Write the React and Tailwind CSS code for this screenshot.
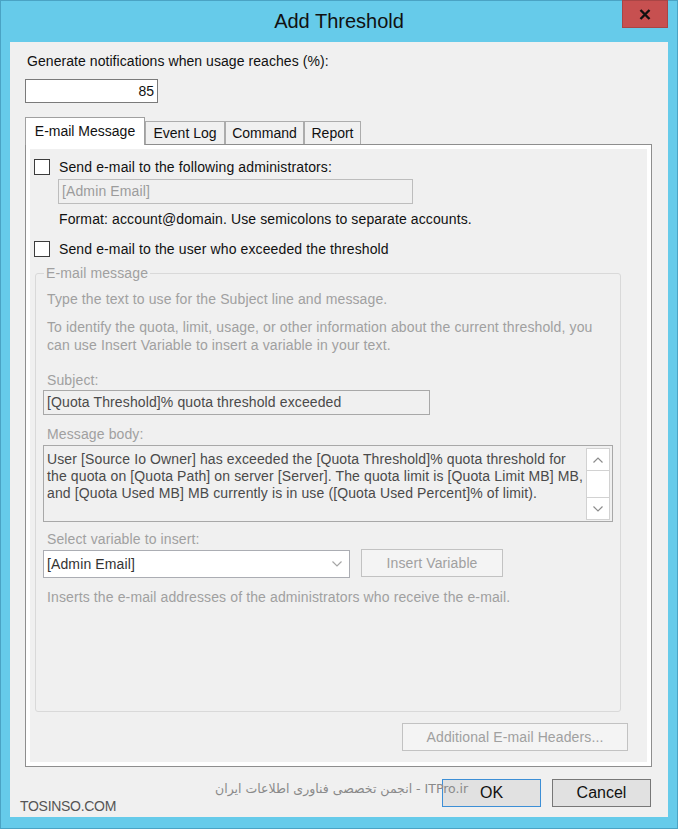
import React from 'react';

const Checkbox = () => (
  <div className="w-[16px] h-[16px] border border-[#3c3c3c] bg-white shrink-0" />
);

const Chevron = ({ up, color = '#8c8c8c' }) => (
  <svg width="12" height="8" viewBox="0 0 12 8">
    <path d={up ? 'M1.5 6.5 L6 2 L10.5 6.5' : 'M1.5 1.5 L6 6 L10.5 1.5'} fill="none" stroke={color} strokeWidth="1.2" />
  </svg>
);

const App = () => {
  return (
    <div className="w-[678px] h-[829px] bg-[#66cbea] border border-[#4aa3c4] font-['Liberation_Sans',Arial,sans-serif] text-[14px] text-[#111]">
      {/* title bar */}
      <div className="h-[41px] flex">
        <div className="w-[55px]" />
        <div className="flex-1 text-center text-[20px] leading-[41px] text-[#111]">Add Threshold</div>
        <div className="w-[46px] h-[28px] mr-[9px] -mt-px bg-[#c75050] border border-[#a94545] flex items-center justify-center">
          <svg width="12" height="11" viewBox="0 0 12 11">
            <path d="M1.5 1 L10.5 10 M10.5 1 L1.5 10" stroke="#111" strokeWidth="2.4" />
          </svg>
        </div>
      </div>

      {/* client area */}
      <div className="relative mx-[9px] h-[775px] bg-[#f0f0f0] pl-[15px] pr-[16px] pt-[11px]">
        <div className="ml-[2px] h-[16px] leading-[16px] tracking-[0.06px]">Generate notifications when usage reaches (%):</div>
        <div className="mt-[10px] w-[133px] h-[24px] border border-[#7a7a7a] bg-white text-right pr-[3px] leading-[22px]">85</div>

        {/* tabs */}
        <div className="mt-[14px] h-[27px] flex items-end">
          <div className="relative z-10 -mb-px w-[120px] h-[28px] border border-b-0 border-[#a0a0a0] bg-white text-center pt-[5px] leading-[16px]">E-mail Message</div>
          <div className="w-[80px] h-[23px] border border-b-0 border-[#acacac] bg-[#f0f0f0] text-center pt-[3px] leading-[16px]">Event Log</div>
          <div className="w-[79px] h-[23px] border border-b-0 border-[#acacac] bg-[#f0f0f0] text-center pt-[3px] leading-[16px]">Command</div>
          <div className="w-[57px] h-[23px] border border-b-0 border-[#acacac] bg-[#f0f0f0] text-center pt-[3px] leading-[16px]">Report</div>
        </div>

        {/* tab panel */}
        <div className="w-[627px] h-[623px] border border-[#8e8e8e] bg-white p-[4px]">
          <div className="h-full bg-[#f0f0f0] flex flex-col tracking-[0.12px]">
            <div className="mt-[10px] ml-[4px] flex items-center gap-[9px] leading-[16px]">
              <Checkbox />
              <span>Send e-mail to the following administrators:</span>
            </div>
            <div className="ml-[28px] mt-[4px] w-[355px] h-[25px] border border-[#bdbdbd] bg-[#f0f0f0] text-[#9c9c9c] pl-[3px] leading-[23px]">[Admin Email]</div>
            <div className="ml-[29px] mt-[7px] leading-[16px]">Format: account@domain. Use semicolons to separate accounts.</div>
            <div className="mt-[14px] ml-[4px] flex items-center gap-[9px] leading-[16px]">
              <Checkbox />
              <span>Send e-mail to the user who exceeded the threshold</span>
            </div>

            <fieldset className="ml-[5px] mt-[8px] w-[586px] h-[447px] border border-[#d9d9d9] rounded-[3px] p-0 m-0 text-[#a0a0a0]">
              <legend className="ml-[8px] px-[2px] leading-[16px]">E-mail message</legend>
              <div className="ml-[11px] mt-[10px] leading-[16px]">Type the text to use for the Subject line and message.</div>
              <div className="ml-[11px] mt-[11px] leading-[18px] whitespace-nowrap">
                To identify the quota, limit, usage, or other information about the current threshold, you
                <br />
                can use Insert Variable to insert a variable in your text.
              </div>
              <div className="ml-[11px] mt-[18px] leading-[16px]">Subject:</div>
              <div className="ml-[7px] mt-[2px] w-[387px] h-[25px] border border-[#a8a8a8] bg-[#f0f0f0] text-[#4a4a4a] pl-[3px] leading-[23px]">[Quota Threshold]% quota threshold exceeded</div>
              <div className="ml-[11px] mt-[11px] leading-[16px]">Message body:</div>
              <div className="ml-[7px] mt-[3px] w-[570px] h-[77px] border border-[#a8a8a8] bg-[#f0f0f0] flex">
                <div className="flex-1 pl-[3px] pt-[5px] leading-[17px] text-[#4a4a4a] whitespace-nowrap">
                  User [Source Io Owner] has exceeded the [Quota Threshold]% quota threshold for
                  <br />
                  the quota on [Quota Path] on server [Server]. The quota limit is [Quota Limit MB] MB,
                  <br />
                  and [Quota Used MB] MB currently is in use ([Quota Used Percent]% of limit).
                </div>
                <div className="mt-[2px] mr-[2px] w-[24px] h-[72px] flex flex-col bg-white border border-[#d2d2d2]">
                  <div className="h-[22px] border-b border-[#d2d2d2] flex items-center justify-center"><Chevron up /></div>
                  <div className="flex-1" />
                  <div className="h-[22px] border-t border-[#d2d2d2] flex items-center justify-center"><Chevron /></div>
                </div>
              </div>
              <div className="ml-[11px] mt-[9px] leading-[16px]">Select variable to insert:</div>
              <div className="ml-[7px] mt-[2px] flex items-start">
                <div className="mt-[1px] w-[307px] h-[28px] border border-[#abadb3] bg-white flex items-center justify-between pl-[3px] pr-[6px] text-[#333]">
                  <span>[Admin Email]</span>
                  <Chevron color="#a6a6a6" />
                </div>
                <div className="ml-[11px] w-[142px] h-[28px] border border-[#c2c2c2] bg-[#f4f4f4] text-center leading-[26px]">Insert Variable</div>
              </div>
              <div className="ml-[11px] mt-[11px] leading-[16px]">Inserts the e-mail addresses of the administrators who receive the e-mail.</div>
            </fieldset>

            <div className="mt-[11px] ml-auto mr-[19px] w-[226px] h-[28px] border border-[#c2c2c2] bg-[#f4f4f4] text-[#a0a0a0] text-center leading-[26px]">Additional E-mail Headers...</div>
          </div>
        </div>

        {/* dialog buttons */}
        <div className="mt-[12px] mr-px flex justify-end gap-[11px]">
          <div className="w-[99px] h-[28px] border border-[#3d8fd6] bg-[#e1e1e1] text-center leading-[26px] text-[16px]">OK</div>
          <div className="w-[99px] h-[28px] border border-[#777] bg-[#e1e1e1] text-center leading-[26px] text-[16px]">Cancel</div>
        </div>

        {/* watermarks */}
        <div className="absolute left-[205px] top-[739px] text-[12.5px] leading-[16px] text-[#8a8a8a] font-['DejaVu_Sans',sans-serif] whitespace-nowrap" dir="ltr">
          انجمن تخصصی فناوری اطلاعات ایران - ITPro.ir
        </div>
        <div className="absolute left-[10px] top-[756px] text-[14px] leading-[16px] text-[#555] tracking-[-0.3px]">TOSINSO.COM</div>
      </div>
    </div>
  );
};

export default App;
